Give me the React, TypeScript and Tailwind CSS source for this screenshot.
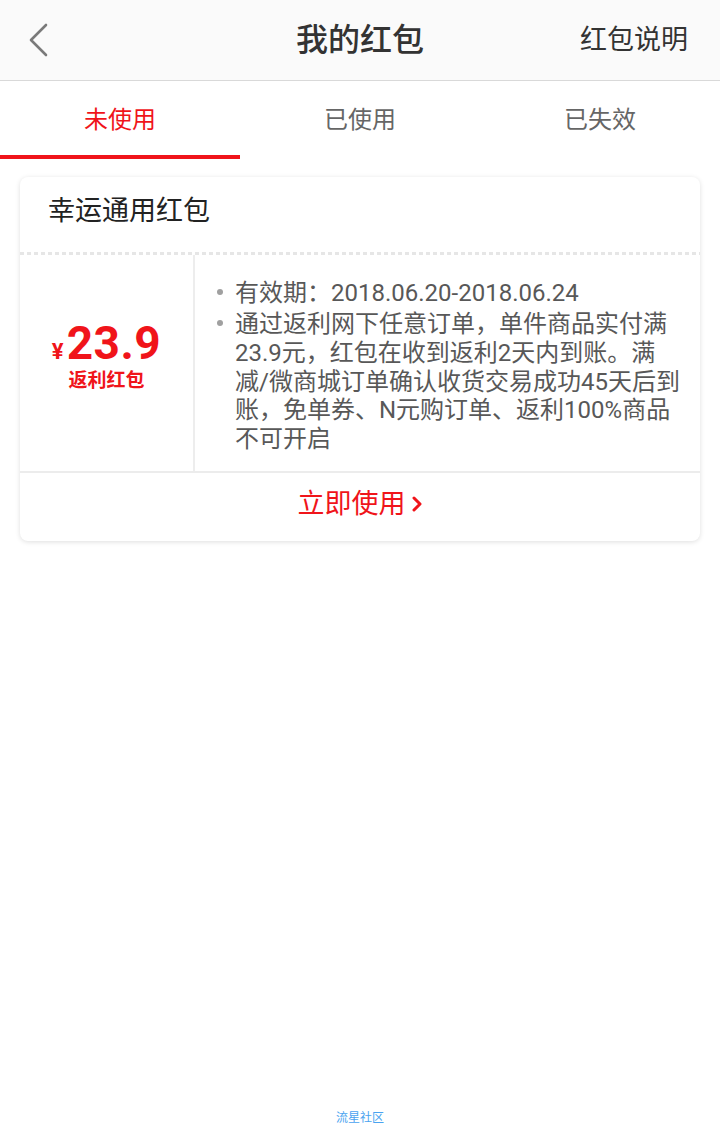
const red = "text-[#f0141a]";

function BackIcon() {
  return (
    <svg width="24" height="36" viewBox="0 0 24 36" fill="none">
      <path d="M19 3 L4 18 L19 33" stroke="#7a7a7a" strokeWidth="2.6" strokeLinecap="round" strokeLinejoin="round" />
    </svg>
  );
}

function Chevron() {
  return (
    <svg width="12" height="20" viewBox="0 0 12 20" fill="none" className="ml-[5px]">
      <path d="M3 4 L9 10 L3 16" stroke="#f0141a" strokeWidth="3" strokeLinecap="round" strokeLinejoin="round" />
    </svg>
  );
}

const tabs = ["未使用", "已使用", "已失效"];

const ruleLines = [
  ["有效期：2018.06.20-2018.06.24"],
  [
    "通过返利网下任意订单，单件商品实付满",
    "23.9元，红包在收到返利2天内到账。满",
    "减/微商城订单确认收货交易成功45天后到",
    "账，免单券、N元购订单、返利100%商品",
    "不可开启",
  ],
];

export default function App() {
  return (
    <div className="flex flex-col h-[1124px] bg-white font-['Roboto','Noto_Sans_CJK_SC',sans-serif]">
      {/* header */}
      <div className="relative flex items-center justify-center h-[81px] bg-[#fafafa] border-b border-[#d9d9d9]">
        <div className="absolute left-[27px] top-[22px]">
          <BackIcon />
        </div>
        <h1 className="text-[32px] leading-[40px] font-medium text-[#333]">我的红包</h1>
        <div className="absolute right-[32px] top-[20px] text-[27px] leading-[40px] text-[#333]">红包说明</div>
      </div>

      {/* tabs */}
      <div className="grid grid-cols-3 h-[78px]">
        {tabs.map((t, i) => (
          <div key={t} className="flex flex-col">
            <div className={`flex-1 flex items-center justify-center text-[24px] ${i === 0 ? red : "text-[#666]"}`}>
              <span className="mt-[4px]">{t}</span>
            </div>
            <div className={`h-[4px] ${i === 0 ? "bg-[#f0141a]" : ""}`} />
          </div>
        ))}
      </div>

      {/* card */}
      <div className="mx-[20px] mt-[18px] bg-white rounded-[8px] shadow-[0_1px_5px_rgba(0,0,0,0.13)] overflow-hidden">
        <div className="h-[75px] pt-[20px] pl-[28px] text-[27px] leading-[28px] text-[#222]">幸运通用红包</div>
        <div className="h-[3px] bg-[repeating-linear-gradient(90deg,#e6e6e6_0_4px,transparent_4px_7px)]" />
        <div className="flex h-[216px]">
          <div className="w-[175px] shrink-0 flex flex-col items-center justify-center border-r-2 border-[#ededed] pb-[15px]">
            <div className={`flex items-baseline font-bold ${red}`}>
              <span className="text-[22px] mr-[3px]">¥</span>
              <span className="text-[46px] leading-[50px] tracking-[0.5px]">23.9</span>
            </div>
            <div className={`text-[19px] leading-[26px] font-bold ${red}`}>返利红包</div>
          </div>
          <div className="flex-1 flex flex-col justify-center gap-[3px] pl-[22px] pt-[6px] text-[24px] leading-[28.6px] text-[#585858]">
            {ruleLines.map((lines, i) => (
              <div key={i} className="flex">
                <span className="w-[6px] h-[6px] rounded-full bg-[#a0a0a0] mt-[10px] mr-[12px] shrink-0" />
                <div>
                  {lines.map((l) => (
                    <div key={l} className="whitespace-nowrap">{l}</div>
                  ))}
                </div>
              </div>
            ))}
          </div>
        </div>
        <div className="h-[70px] border-t-2 border-[#ececec] flex justify-center pt-[17px]">
          <div className={`flex items-center h-[28px] text-[27px] ${red}`}>
            立即使用
            <Chevron />
          </div>
        </div>
      </div>

      <div className="mt-auto text-center text-[12px] leading-[12px] text-[#4aa3f0]">流星社区</div>
    </div>
  );
}
